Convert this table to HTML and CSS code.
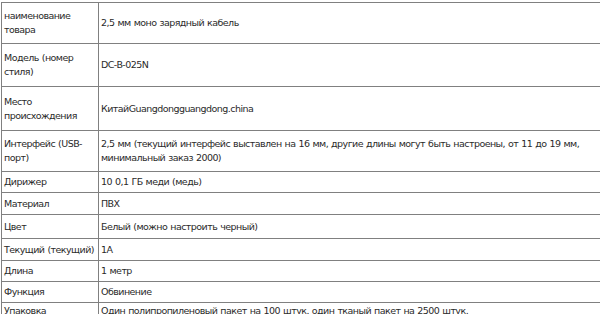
FILE: index.html
```html
<!DOCTYPE html>
<html lang="ru">
<head>
<meta charset="utf-8">
<link rel="stylesheet" href="styles.css">
</head>
<body>
<table class="spec">
  <tr class="r41"><td class="k">наименование товара</td><td class="v">2,5 мм моно зарядный кабель</td></tr>
  <tr class="r43"><td class="k">Модель (номер стиля)</td><td class="v">DC-B-025N</td></tr>
  <tr class="r44"><td class="k">Место происхождения</td><td class="v">КитайGuangdongguangdong.china</td></tr>
  <tr class="r41"><td class="k">Интерфейс (USB-порт)</td><td class="v">2,5 мм (текущий интерфейс выставлен на 16 мм, другие длины могут быть настроены, от 11 до 19 мм, минимальный заказ 2000)</td></tr>
  <tr class="r21"><td class="k">Дирижер</td><td class="v">10 0,1 ГБ меди (медь)</td></tr>
  <tr class="r22"><td class="k">Материал</td><td class="v">ПВХ</td></tr>
  <tr class="r24"><td class="k">Цвет</td><td class="v">Белый (можно настроить черный)</td></tr>
  <tr class="r22"><td class="k">Текущий (текущий)</td><td class="v">1A</td></tr>
  <tr class="r21"><td class="k">Длина</td><td class="v">1 метр</td></tr>
  <tr class="r21"><td class="k">Функция</td><td class="v">Обвинение</td></tr>
  <tr class="last"><td class="k">Упаковка</td><td class="v">Один полипропиленовый пакет на 100 штук. один тканый пакет на 2500 штук.</td></tr>
</table>
</body>
</html>
```
FILE: styles.css
```css
html, body {
  margin: 0;
  padding: 0;
  overflow: hidden;
  background: #ffffff;
}
.spec {
  margin: 2px 0 0 1px;
  border-collapse: collapse;
  width: 606px;
  table-layout: fixed;
  font-family: "DejaVu Sans", Verdana, sans-serif;
  font-size: 9.5px;
  letter-spacing: -0.55px;
  word-spacing: 0.5px;
  line-height: 14px;
  color: #2a2a2a;
}
.spec td {
  border: 1px solid #808080;
  padding: 0 2px 0 2px;
  vertical-align: middle;
}
.spec .k { width: 92px; }
.r41 td { height: 40px; }
.r43 td { height: 42px; }
.r44 td { height: 43px; }
.r21 td { height: 20px; }
.r22 td { height: 21px; }
.r24 td { height: 23px; }
.last td {
  height: 21px;
  vertical-align: top;
  padding-top: 1px;
}
```
